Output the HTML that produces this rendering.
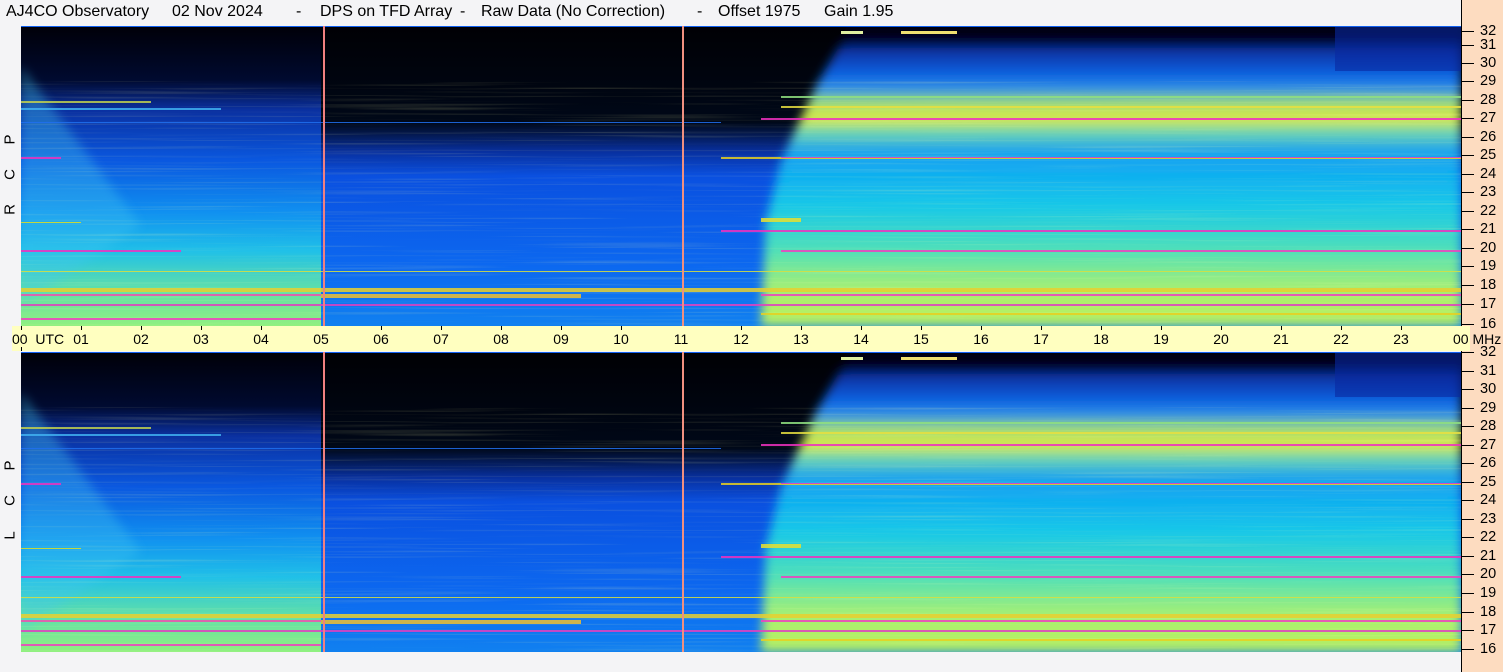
<!DOCTYPE html>
<html><head><meta charset="utf-8"><style>
html,body{margin:0;padding:0;}
body{width:1503px;height:672px;background:#f4f4f6;position:relative;overflow:hidden;font-family:"Liberation Sans",sans-serif;}
.t{position:absolute;top:3px;font-size:16px;color:#000;white-space:pre;}
.ax{position:absolute;left:12px;top:326px;width:1458px;height:25px;background:#ffffc0}
.rs{position:absolute;left:1461px;top:0;width:42px;height:672px;background:#fddcc0;border-left:1px solid #000}
.lab{position:absolute;font-size:14px;color:#000;}
.hl{position:absolute;top:331px;font-size:14px;transform:translateX(-50%)}
.tk{position:absolute;width:1px;background:#000}
.rt{position:absolute;left:1462px;width:12px;height:1px;background:#000}
.rl{position:absolute;left:1480px;font-size:14.5px;line-height:14px}
.lt{position:absolute;left:2px;font-size:15px;transform:rotate(-90deg);width:16px;text-align:center}
svg{position:absolute;left:21px}
</style></head><body>
<div class="t" style="left:6px">AJ4CO Observatory</div>
<div class="t" style="left:172px">02 Nov 2024</div>
<div class="t" style="left:296px">-</div>
<div class="t" style="left:320px">DPS on TFD Array</div>
<div class="t" style="left:460px">-</div>
<div class="t" style="left:481px">Raw Data (No Correction)</div>
<div class="t" style="left:697px">-</div>
<div class="t" style="left:718px">Offset 1975</div>
<div class="t" style="left:824px">Gain 1.95</div>
<div class="rs"></div>
<div class="ax"></div>

<svg width="1440" height="300" style="top:26px" viewBox="0 0 1440 300">
<defs>
<linearGradient id="gl" x1="0" y1="0" x2="0" y2="1">
<stop offset="0" stop-color="#000008"/><stop offset="0.18" stop-color="#000a30"/><stop offset="0.28" stop-color="#0a30a0"/><stop offset="0.45" stop-color="#0a58e0"/><stop offset="0.62" stop-color="#1090f0"/><stop offset="0.75" stop-color="#20c0e8"/><stop offset="0.88" stop-color="#60e0a8"/><stop offset="1" stop-color="#90f080"/></linearGradient>
<linearGradient id="gm" x1="0" y1="0" x2="0" y2="1">
<stop offset="0" stop-color="#000004"/><stop offset="0.32" stop-color="#000818"/><stop offset="0.42" stop-color="#0830a0"/><stop offset="0.5" stop-color="#0a50e0"/><stop offset="0.8" stop-color="#0c68f0"/><stop offset="1" stop-color="#1080f0"/></linearGradient>
<linearGradient id="gr" x1="0" y1="0" x2="0" y2="1">
<stop offset="0" stop-color="#000010"/><stop offset="0.05" stop-color="#000420"/><stop offset="0.08" stop-color="#0830a0"/><stop offset="0.16" stop-color="#0860e0"/><stop offset="0.21" stop-color="#3090e8"/><stop offset="0.26" stop-color="#a0e070"/><stop offset="0.31" stop-color="#e0e840"/><stop offset="0.35" stop-color="#70d8b0"/><stop offset="0.42" stop-color="#18a0f0"/><stop offset="0.5" stop-color="#10b0f0"/><stop offset="0.6" stop-color="#18c8e8"/><stop offset="0.75" stop-color="#50e0b8"/><stop offset="0.88" stop-color="#a8f070"/><stop offset="1" stop-color="#b8f060"/></linearGradient>
<filter id="bl"><feGaussianBlur stdDeviation="5"/></filter>
<filter id="nz" x="0" y="0" width="1" height="1"><feTurbulence type="fractalNoise" baseFrequency="0.004 0.5" numOctaves="2" seed="3"/><feColorMatrix type="matrix" values="0 0 0 0 1  0 0 0 0 1  0 0 0 0 0.4  0 0 0 1.4 -0.75"/></filter>
<g id="pn">
<rect x="0" y="0" width="1440" height="300" fill="url(#gm)"/>
<rect x="0" y="0" width="300" height="300" fill="url(#gl)"/>
<polygon points="0,40 0,280 120,200" fill="#40c8f0" opacity="0.35" filter="url(#bl)"/>
<polygon points="830,0 1440,0 1440,300 740,300 745,195 760,135 795,60" fill="url(#gr)" filter="url(#bl)"/>
<rect x="1314" y="0" width="126" height="45" fill="#0828a0" opacity="0.6"/>
<rect x="0" y="55" width="1440" height="245" filter="url(#nz)" opacity="0.35"/>
<rect x="820" y="5" width="22" height="3" fill="#e0f0a0"/><rect x="880" y="5" width="56" height="3" fill="#f0e070"/>
<rect x="0" y="0" width="1440" height="1" fill="#1060f0"/>
<g opacity="0.85">
<rect x="740" y="92" width="700" height="2" fill="#f030c0"/>
<rect x="0" y="96" width="700" height="1" fill="#2070f0"/>
<rect x="0" y="131" width="40" height="2" fill="#f030c0"/>
<rect x="700" y="131" width="740" height="2" fill="#e8d020"/>
<rect x="760" y="131" width="680" height="1" fill="#f040c0"/>
<rect x="740" y="192" width="40" height="4" fill="#e8e030"/>
<rect x="0" y="196" width="60" height="1" fill="#e0e020"/>
<rect x="700" y="204" width="740" height="2" fill="#f030c0"/>
<rect x="0" y="224" width="160" height="2" fill="#f030c0"/>
<rect x="760" y="224" width="680" height="2" fill="#f040c0"/>
<rect x="0" y="262" width="1440" height="4" fill="#e8d030"/>
<rect x="0" y="268" width="560" height="2" fill="#f050b0"/>
<rect x="300" y="268" width="260" height="4" fill="#f0c030"/>
<rect x="740" y="268" width="700" height="2" fill="#f040c0"/>
<rect x="0" y="278" width="1440" height="2" fill="#e040c0"/>
<rect x="0" y="292" width="300" height="2" fill="#f040c0"/>
<rect x="740" y="287" width="700" height="2" fill="#e8d020"/>
<rect x="0" y="245" width="1440" height="1" fill="#d8e040"/>
<rect x="760" y="80" width="680" height="2" fill="#e8e040"/>
<rect x="760" y="70" width="680" height="2" fill="#90e080"/>
<rect x="0" y="82" width="200" height="2" fill="#40b0f0"/>
<rect x="0" y="75" width="130" height="2" fill="#c0d050"/>
</g>
<rect x="302" y="0" width="2" height="300" fill="#f08080"/>
<rect x="661" y="0" width="2" height="300" fill="#f09080"/>
</g>
</defs>
<use href="#pn"/>
</svg>
<svg width="1440" height="300" style="top:352px" viewBox="0 0 1440 300"><use href="#pn"/></svg>

<div class="lt" style="top:131px">P</div><div class="lt" style="top:166px">C</div><div class="lt" style="top:201px">R</div>
<div class="lt" style="top:457px">P</div><div class="lt" style="top:492px">C</div><div class="lt" style="top:527px">L</div>

<div class="lab" style="left:12px;top:331px">00 &nbsp;UTC</div>
<div class="tk" style="left:21px;top:326px;height:4px"></div><div class="tk" style="left:21px;top:347px;height:4px"></div>
<div class="hl" style="left:81px">01</div><div class="hl" style="left:141px">02</div><div class="hl" style="left:201px">03</div><div class="hl" style="left:261px">04</div><div class="hl" style="left:321px">05</div><div class="hl" style="left:381px">06</div><div class="hl" style="left:441px">07</div><div class="hl" style="left:501px">08</div><div class="hl" style="left:561px">09</div><div class="hl" style="left:621px">10</div><div class="hl" style="left:681px">11</div><div class="hl" style="left:741px">12</div><div class="hl" style="left:801px">13</div><div class="hl" style="left:861px">14</div><div class="hl" style="left:921px">15</div><div class="hl" style="left:981px">16</div><div class="hl" style="left:1041px">17</div><div class="hl" style="left:1101px">18</div><div class="hl" style="left:1161px">19</div><div class="hl" style="left:1221px">20</div><div class="hl" style="left:1281px">21</div><div class="hl" style="left:1341px">22</div><div class="hl" style="left:1401px">23</div>
<div class="lab" style="left:1453px;top:331px">00 MHz</div>
<div style="position:absolute;left:0;top:0">
<div class="tk" style="left:81px;top:326px;height:4px"></div><div class="tk" style="left:141px;top:326px;height:4px"></div><div class="tk" style="left:201px;top:326px;height:4px"></div><div class="tk" style="left:261px;top:326px;height:4px"></div><div class="tk" style="left:381px;top:326px;height:4px"></div><div class="tk" style="left:441px;top:326px;height:4px"></div><div class="tk" style="left:501px;top:326px;height:4px"></div><div class="tk" style="left:561px;top:326px;height:4px"></div><div class="tk" style="left:621px;top:326px;height:4px"></div><div class="tk" style="left:741px;top:326px;height:4px"></div><div class="tk" style="left:801px;top:326px;height:4px"></div><div class="tk" style="left:861px;top:326px;height:4px"></div><div class="tk" style="left:921px;top:326px;height:4px"></div><div class="tk" style="left:981px;top:326px;height:4px"></div><div class="tk" style="left:1041px;top:326px;height:4px"></div><div class="tk" style="left:1101px;top:326px;height:4px"></div><div class="tk" style="left:1161px;top:326px;height:4px"></div><div class="tk" style="left:1221px;top:326px;height:4px"></div><div class="tk" style="left:1281px;top:326px;height:4px"></div><div class="tk" style="left:1341px;top:326px;height:4px"></div><div class="tk" style="left:1401px;top:326px;height:4px"></div>
</div>

<div class="rt" style="top:31px"></div><div class="rl" style="top:24px">32</div>
<div class="rt" style="top:45px"></div><div class="rl" style="top:38px">31</div>
<div class="rt" style="top:63px"></div><div class="rl" style="top:56px">30</div>
<div class="rt" style="top:81px"></div><div class="rl" style="top:74px">29</div>
<div class="rt" style="top:100px"></div><div class="rl" style="top:93px">28</div>
<div class="rt" style="top:118px"></div><div class="rl" style="top:111px">27</div>
<div class="rt" style="top:137px"></div><div class="rl" style="top:130px">26</div>
<div class="rt" style="top:155px"></div><div class="rl" style="top:148px">25</div>
<div class="rt" style="top:174px"></div><div class="rl" style="top:167px">24</div>
<div class="rt" style="top:192px"></div><div class="rl" style="top:185px">23</div>
<div class="rt" style="top:211px"></div><div class="rl" style="top:204px">22</div>
<div class="rt" style="top:229px"></div><div class="rl" style="top:222px">21</div>
<div class="rt" style="top:248px"></div><div class="rl" style="top:241px">20</div>
<div class="rt" style="top:266px"></div><div class="rl" style="top:259px">19</div>
<div class="rt" style="top:285px"></div><div class="rl" style="top:278px">18</div>
<div class="rt" style="top:304px"></div><div class="rl" style="top:297px">17</div>
<div class="rt" style="top:324px"></div><div class="rl" style="top:317px">16</div>

<div class="rt" style="top:352px"></div><div class="rl" style="top:345px">32</div>
<div class="rt" style="top:371px"></div><div class="rl" style="top:364px">31</div>
<div class="rt" style="top:389px"></div><div class="rl" style="top:382px">30</div>
<div class="rt" style="top:408px"></div><div class="rl" style="top:401px">29</div>
<div class="rt" style="top:426px"></div><div class="rl" style="top:419px">28</div>
<div class="rt" style="top:445px"></div><div class="rl" style="top:438px">27</div>
<div class="rt" style="top:463px"></div><div class="rl" style="top:456px">26</div>
<div class="rt" style="top:482px"></div><div class="rl" style="top:475px">25</div>
<div class="rt" style="top:500px"></div><div class="rl" style="top:493px">24</div>
<div class="rt" style="top:519px"></div><div class="rl" style="top:512px">23</div>
<div class="rt" style="top:537px"></div><div class="rl" style="top:530px">22</div>
<div class="rt" style="top:556px"></div><div class="rl" style="top:549px">21</div>
<div class="rt" style="top:574px"></div><div class="rl" style="top:567px">20</div>
<div class="rt" style="top:593px"></div><div class="rl" style="top:586px">19</div>
<div class="rt" style="top:612px"></div><div class="rl" style="top:605px">18</div>
<div class="rt" style="top:630px"></div><div class="rl" style="top:623px">17</div>
<div class="rt" style="top:649px"></div><div class="rl" style="top:642px">16</div>
</body></html>
